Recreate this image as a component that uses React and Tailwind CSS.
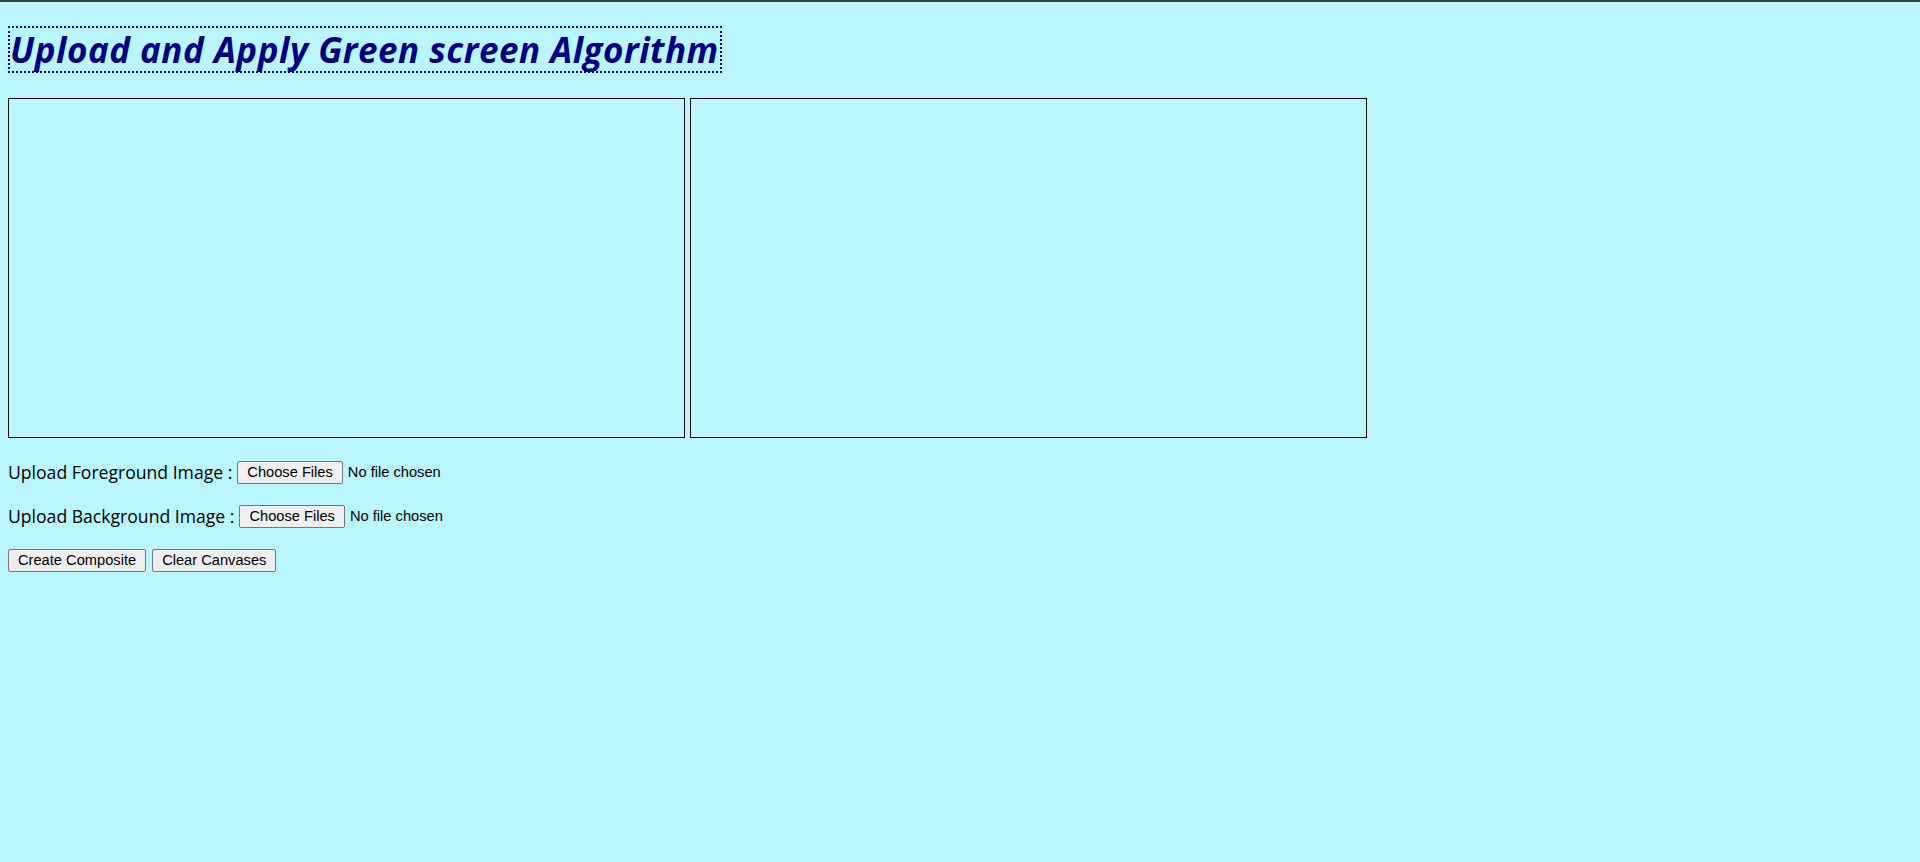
const Btn = ({ children }) => (
  <button className="h-[23px] px-[9px] bg-[#efefef] border border-[#767676] rounded-[2px] text-[14.67px] text-black leading-none font-['Liberation_Sans',Arial,sans-serif]">
    {children}
  </button>
);

const FileRow = ({ label }) => (
  <div className="mt-4 h-[28px] flex items-center">
    <span className="text-[17.6px] text-black mr-[5px]">{label}</span>
    <Btn>Choose Files</Btn>
    <span className="ml-[5px] text-[14.67px] text-black font-['Liberation_Sans',Arial,sans-serif]">No file chosen</span>
  </div>
);

export default function App() {
  return (
    <div className="min-h-screen bg-[#b9f6ff] border-t-2 border-[#3c3c3c] px-2 font-['Open_Sans','Noto_Sans',sans-serif]">
      {/* Heading */}
      <div className="pt-[24px]">
        <h1 className="inline-flex items-center h-[47px] border-2 border-dotted border-[#000080] text-[#000080] text-[35px] tracking-[0.5px] font-bold italic pr-[1px] leading-none">
          Upload and Apply Green screen Algorithm
        </h1>
      </div>

      {/* Canvases */}
      <div className="mt-[25px] flex gap-[5px]">
        <div className="w-[677px] h-[340px] border border-black" />
        <div className="w-[677px] h-[340px] border border-black" />
      </div>

      <div className="pt-[4px]">
        <FileRow label="Upload Foreground Image :" />
        <FileRow label="Upload Background Image :" />
        <div className="mt-4 h-[28px] flex items-center gap-[6px]">
          <Btn>Create Composite</Btn>
          <Btn>Clear Canvases</Btn>
        </div>
      </div>
    </div>
  );
}
